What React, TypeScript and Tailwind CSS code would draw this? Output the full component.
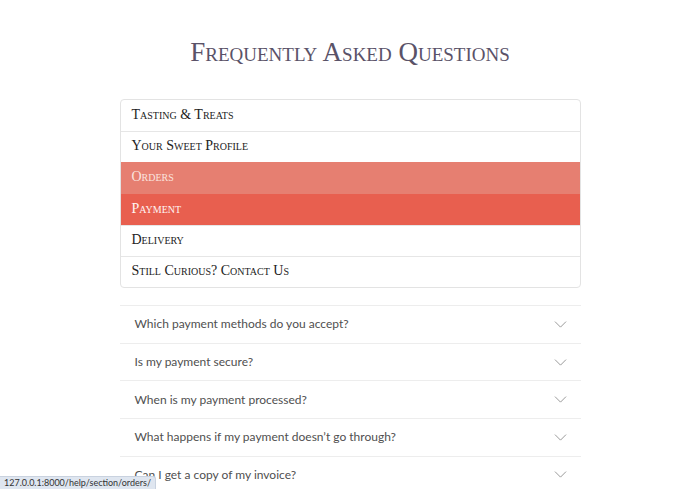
import { ChevronDown } from "lucide-react";

const sections = [
  { label: "Tasting & Treats", state: "" },
  { label: "Your Sweet Profile", state: "" },
  { label: "Orders", state: "hover" },
  { label: "Payment", state: "active" },
  { label: "Delivery", state: "" },
  { label: "Still Curious? Contact Us", state: "" },
];

const questions = [
  "Which payment methods do you accept?",
  "Is my payment secure?",
  "When is my payment processed?",
  "What happens if my payment doesn\u2019t go through?",
  "Can I get a copy of my invoice?",
];

export default function App() {
  return (
    <div className="relative h-[489px] w-[700px] overflow-hidden bg-white">
      {/* TITLE */}

      <h1
        className="
          pt-[34px]
          text-center
          text-[27px]
          leading-[36px]
          text-[#5a5268]
          [font-variant:small-caps]
          [font-family:'Liberation_Serif',serif]
        "
      >
        Frequently Asked Questions
      </h1>

      {/* SECTIONS */}

      <div
        className="
          mx-auto mt-[29px]
          w-[461px]
          overflow-hidden
          rounded-[4px]
          border
          border-[#e3e3e3]
          [font-family:'Liberation_Serif',serif]
        "
      >
        {sections.map((s, i) => (
          <div
            key={s.label}
            className={`
              flex h-[31.2px] items-center
              px-[11px] pb-[3px]
              text-[14px]
              [font-variant:small-caps]
              ${i > 0 ? "border-t border-[#e6e6e6]" : ""}
              ${
                s.state === "hover"
                  ? "border-[#e67f71] bg-[#e67f71] text-[#fbe3df]"
                  : s.state === "active"
                  ? "border-[#e85f4f] bg-[#e85f4f] text-[#fff4f2]"
                  : "text-[#222]"
              }
            `}
          >
            {s.label}
          </div>
        ))}
      </div>

      {/* QUESTIONS */}

      <div
        className="
          mx-auto mt-[17px]
          w-[461px]
          [font-family:Lato,sans-serif]
        "
      >
        {questions.map((q) => (
          <div
            key={q}
            className="
              flex h-[37.6px] items-center
              justify-between
              border-t border-[#ededed]
              pl-[15px] pr-[10px]
              text-[12px]
              text-[#4f4f4f]
            "
          >
            <span>{q}</span>

            <ChevronDown
              className="h-[21px] w-[21px] text-[#8a8a8a]"
              strokeWidth={1}
            />
          </div>
        ))}
      </div>

      {/* STATUS BAR */}

      <div
        className="
          absolute bottom-0 left-0
          rounded-tr-[3px]
          border-t border-r border-[#c9d2df]
          bg-[#dfe6f0]
          px-[4px]
          text-[9px]
          leading-[12px]
          text-[#333]
          [font-family:Lato,sans-serif]
        "
      >
        127.0.0.1:8000/help/section/orders/
      </div>
    </div>
  );
}
